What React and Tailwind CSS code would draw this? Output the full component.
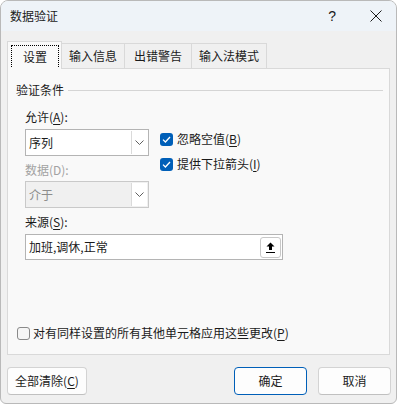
import React from 'react';

const Key = ({ children }) => <span className="underline underline-offset-2">{children}</span>;

const Chevron = () => (
  <svg width="9" height="5" viewBox="0 0 9 5" fill="none">
    <path d="M0.5 0.5 L4.5 4.5 L8.5 0.5" stroke="#5f5f5f" strokeWidth="1" />
  </svg>
);

const Check = ({ checked }) =>
  checked ? (
    <span className="w-[13px] h-[13px] rounded-[3px] bg-[#005fb8] flex items-center justify-center">
      <svg width="9" height="7" viewBox="0 0 9 7" fill="none">
        <path d="M1 3.6 L3.4 6 L8 1" stroke="white" strokeWidth="1.3" />
      </svg>
    </span>
  ) : (
    <span className="w-[13px] h-[13px] rounded-[3px] border border-[#8a8a8a] bg-[#f6f6f6]" />
  );

const Select = ({ value, disabled }) => (
  <div
    className={`h-[27px] w-[124px] flex border ${
      disabled ? 'border-[#c9c9c9] bg-[#f0f0f0]' : 'border-[#b4b4b4] bg-white'
    }`}
  >
    <div className={`flex-1 pl-[3px] flex items-center ${disabled ? 'text-[#8d8d8d]' : ''}`}>{value}</div>
    <div className="w-[16px] my-[1px] mr-[1px] bg-white border-l border-[#dadada] flex items-center justify-center">
      <Chevron />
    </div>
  </div>
);

const Button = ({ children, w, primary }) => (
  <div
    className={`h-[28px] ${w} rounded-[4px] bg-[#fdfdfd] flex items-center justify-center border ${
      primary ? 'border-[#005fb8]' : 'border-[#d3d3d3] border-b-[#c0c0c0]'
    }`}
  >
    {children}
  </div>
);

export default function App() {
  return (
    <div className="w-[400px] h-[405px] bg-white">
      <div className="w-[397px] h-[404px] rounded-t-[8px] rounded-b-[6px] border border-[#b9b9b9] bg-[#f0f0f0] overflow-hidden flex flex-col text-[12px] leading-4 text-[#1b1b1b] font-['Noto_Sans_CJK_SC','Noto_Sans',sans-serif]">
        {/* title bar */}
        <div className="h-[30px] shrink-0 bg-[#eef3f8] flex items-center pl-[9px]">
          <span>数据验证</span>
          <span className="ml-auto mr-[34px] text-[14px] font-['Liberation_Sans',sans-serif]">?</span>
          <svg className="mr-[14px]" width="12" height="12" viewBox="0 0 12 12" fill="none">
            <path d="M0.5 0.5 L11.5 11.5 M11.5 0.5 L0.5 11.5" stroke="#1b1b1b" strokeWidth="1" />
          </svg>
        </div>

        <div className="px-[6px] flex flex-col flex-1">
          {/* tabs */}
          <div className="flex items-end h-[37px] pt-[10px] relative z-10">
            <div className="w-[55px] h-[28px] -mb-px bg-[#f9f9f9] border border-b-0 border-[#d9d9d9] flex pl-[3px] pt-[3px]">
              <div className="w-[48px] h-[22px] border border-dotted border-black border-b-0 flex items-center justify-center">
                设置
              </div>
            </div>
            <div className="h-[25px] px-[7px] border-t border-r border-[#d9d9d9] bg-[#f0f0f0] flex items-center">输入信息</div>
            <div className="h-[25px] px-[9px] border-t border-r border-[#d9d9d9] bg-[#f0f0f0] flex items-center">出错警告</div>
            <div className="h-[25px] px-[7px] border-t border-r border-[#d9d9d9] bg-[#f0f0f0] flex items-center">输入法模式</div>
          </div>

          {/* panel */}
          <div className="h-[287px] border border-[#d9d9d9] bg-[#f9f9f9] flex flex-col">
            <div className="mt-[13px] pl-[8px] flex items-center">
              <span>验证条件</span>
              <div className="flex-1 h-px bg-[#d5d5d5] ml-[4px] mr-[6px]" />
            </div>

            <div className="pl-[17px] mt-[11px] flex">
              <div className="flex flex-col">
                <div>
                  允许(<Key>A</Key>):
                </div>
                <div className="mt-[4px]">
                  <Select value="序列" />
                </div>
                <div className="mt-[6px] text-[#a2a2a2]">数据(D):</div>
                <div className="mt-[3px]">
                  <Select value="介于" disabled />
                </div>
              </div>
              <div className="ml-[11px] pt-[22px] flex flex-col gap-[9px]">
                <div className="flex items-center gap-[4px] h-[16px]">
                  <Check checked />
                  <span>
                    忽略空值(<Key>B</Key>)
                  </span>
                </div>
                <div className="flex items-center gap-[4px] h-[16px]">
                  <Check checked />
                  <span>
                    提供下拉箭头(<Key>I</Key>)
                  </span>
                </div>
              </div>
            </div>

            <div className="pl-[17px] mt-[6px]">
              来源(<Key>S</Key>):
            </div>
            <div className="ml-[17px] mt-[4px] w-[258px] h-[26px] border border-[#b4b4b4] bg-white flex items-center">
              <span className="pl-[3px] flex-1">加班,调休,正常</span>
              <div className="w-[21px] h-[21px] mr-[1px] rounded-[3px] border border-[#c8c8c8] bg-white flex items-center justify-center">
                <svg width="9" height="11" viewBox="0 0 9 11" fill="none">
                  <path d="M4.5 0.5 L8.5 4.5 L6 4.5 L6 8 L3 8 L3 4.5 L0.5 4.5 Z" fill="#000" />
                  <path d="M0 10.5 L9 10.5" stroke="#000" strokeWidth="1" />
                </svg>
              </div>
            </div>

            <div className="mt-auto mb-[13px] pl-[9px] flex items-center gap-[3px] h-[16px]">
              <Check />
              <span>
                对有同样设置的所有其他单元格应用这些更改(<Key>P</Key>)
              </span>
            </div>
          </div>

          {/* buttons */}
          <div className="mt-[12px] flex">
            <Button w="w-[80px]">
              全部清除(<Key>C</Key>)
            </Button>
            <div className="ml-auto flex gap-[11px] mr-[-1px]">
              <Button w="w-[73px]" primary>
                确定
              </Button>
              <Button w="w-[73px]">取消</Button>
            </div>
          </div>
        </div>
      </div>
    </div>
  );
}
